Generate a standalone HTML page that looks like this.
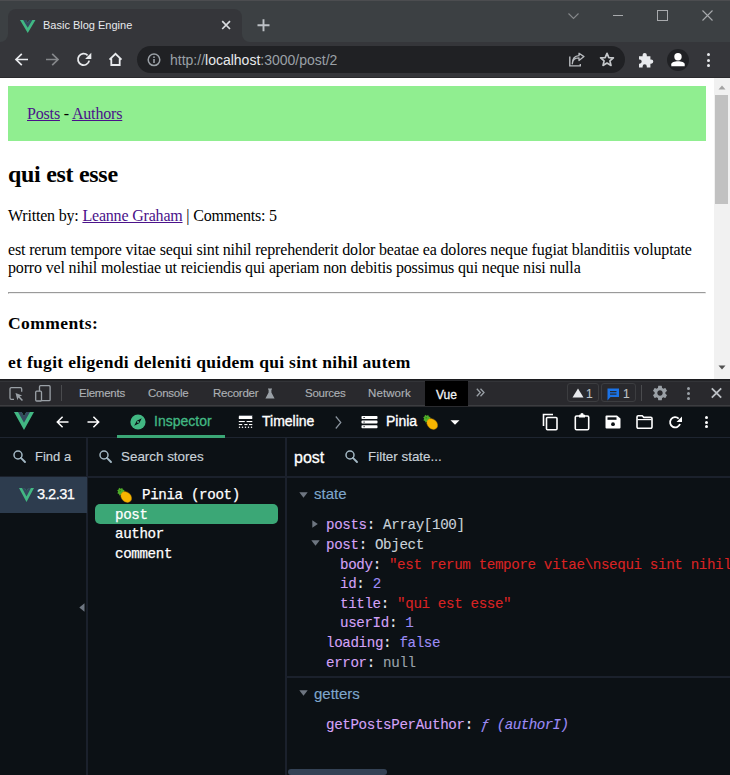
<!DOCTYPE html>
<html><head><meta charset="utf-8">
<style>
*{box-sizing:border-box}
html,body{margin:0;padding:0;width:730px;height:775px;overflow:hidden;background:#0c1115;position:relative}
.a{position:absolute}
.t{position:absolute;white-space:pre;line-height:1;font-family:"Liberation Sans",sans-serif}
.m{position:absolute;white-space:pre;line-height:1;font-family:"Liberation Mono",monospace}
svg{position:absolute;overflow:visible}
/* chrome */
#chrome{position:absolute;left:0;top:0;width:730px;height:78px;background:#35363a}
.fr{position:absolute;background:#3c4043}
/* page */
#page{position:absolute;left:0;top:78px;width:714px;height:301px;background:#fff;overflow:hidden;font-family:"Liberation Serif",serif;color:#000}
#page a{color:#4a128a}
#pagein{margin:8px;position:relative}
#sb{position:absolute;left:714px;top:78px;width:16px;height:301px;background:#f1f1f1}
/* devtools */
#dt .t{-webkit-text-stroke:0.15px currentColor}#dt .m{-webkit-text-stroke:0.12px currentColor}
#dt{position:absolute;left:0;top:379px;width:730px;height:396px;background:#0c1115}
.k{color:#d4a2f7}.c{color:#e6edf3}.o{color:#c9d1d9}.s{color:#d92323}.n{color:#9d8cf6}.g{color:#9ba3ab}
</style></head><body>
<div id="chrome">
  <div class="fr" style="left:0;top:0;width:730px;height:17px"></div>
  <div class="fr" style="left:0;top:0;width:8px;height:42px;border-bottom-right-radius:8px"></div>
  <div class="fr" style="left:242px;top:0;width:488px;height:42px;border-bottom-left-radius:8px"></div>
  <div class="a" style="left:0;top:0;width:730px;height:1px;background:#4c4d50"></div>
  <div class="a" style="left:8px;top:9px;width:234px;height:33px;background:#35363a;border-radius:8px 8px 0 0"></div>
  <!-- tab vue logo -->
  <svg style="left:19.5px;top:19.5px" width="15.5" height="13" viewBox="0 0 261.76 226.69" preserveAspectRatio="none"><path fill="#41b883" d="M161.096.001l-30.225 52.351L100.647.001H-.005l130.877 226.688L261.749.001z"/><path fill="#34495e" d="M161.096.001l-30.225 52.351L100.647.001H52.346l78.526 136.01L209.398.001z"/></svg>
  <div class="t" style="left:43px;top:20px;font-size:11px;color:#e8eaed">Basic Blog Engine</div>
  <!-- tab close -->
  <svg style="left:221px;top:20px" width="10" height="10" viewBox="0 0 10 10"><path d="M1.2 1.2L9 9M9 1.2L1.2 9" stroke="#dadce0" stroke-width="1.7"/></svg>
  <!-- new tab -->
  <svg style="left:257px;top:19px" width="13" height="13" viewBox="0 0 13 13"><path d="M6.5 0.3V12.3M0.5 6.3H12.5" stroke="#bdc1c6" stroke-width="1.9"/></svg>
  <!-- window controls -->
  <svg style="left:568px;top:13px" width="11" height="6" viewBox="0 0 11 6"><path d="M0.5 0.5L5.5 5.5L10.5 0.5" stroke="#86888b" stroke-width="1.1" fill="none"/></svg>
  <div class="a" style="left:613px;top:15px;width:10px;height:1px;background:#a8aaad"></div>
  <div class="a" style="left:657px;top:10px;width:11px;height:11px;border:1px solid #a8aaad"></div>
  <svg style="left:702px;top:10px" width="11" height="11" viewBox="0 0 11 11"><path d="M0.5 0.5L10.5 10.5M10.5 0.5L0.5 10.5" stroke="#a8aaad" stroke-width="1.1"/></svg>
  <!-- toolbar -->
  <div class="a" style="left:0;top:77px;width:730px;height:1px;background:#2a2a2d"></div>
  <svg style="left:14px;top:52px" width="15" height="15" viewBox="0 0 15 15"><path d="M14 7.5H2.2M7.8 1.8L2 7.5L7.8 13.2" stroke="#e8eaed" stroke-width="1.7" fill="none"/></svg>
  <svg style="left:45px;top:52px" width="15" height="15" viewBox="0 0 15 15"><path d="M1 7.5H12.8M7.2 1.8L13 7.5L7.2 13.2" stroke="#85878a" stroke-width="1.7" fill="none"/></svg>
  <svg style="left:76px;top:52px" width="16" height="15" viewBox="0 0 16 15"><path d="M13.2 8.6A5.7 5.7 0 1 1 11.6 3.3" stroke="#e8eaed" stroke-width="1.8" fill="none"/><path d="M15.3 0.8V7H9.1Z" fill="#e8eaed"/></svg>
  <svg style="left:108px;top:52px" width="15" height="15" viewBox="0 0 15 15"><path d="M1.5 7.6L7.5 1.8L13.5 7.6M3.3 6.3V13H11.7V6.3" stroke="#e8eaed" stroke-width="1.8" fill="none" stroke-linejoin="miter"/></svg>
  <div class="a" style="left:137px;top:46px;width:488px;height:27px;background:#202124;border-radius:14px"></div>
  <svg style="left:147px;top:53px" width="14" height="14" viewBox="0 0 14 14"><circle cx="7" cy="6.8" r="5.8" stroke="#9aa0a6" stroke-width="1.5" fill="none"/><rect x="6.2" y="6" width="1.6" height="4" fill="#9aa0a6"/><rect x="6.2" y="3.4" width="1.6" height="1.6" fill="#9aa0a6"/></svg>
  <div class="t" style="left:170px;top:53px;font-size:14px;color:#9aa0a6">http://<span style="color:#e8eaed">localhost</span>:3000/post/2</div>
  <!-- share -->
  <svg style="left:569px;top:53px" width="16" height="14" viewBox="0 0 16 14"><path d="M0.8 3.5V12.9H11.3V11" stroke="#b8bbbf" stroke-width="1.4" fill="none"/><path d="M3.3 10.8C3.6 7 6.3 4.9 10 4.9V7.6L15 3.6L10 0.3V2.7C5.8 2.9 3.4 6.3 3.3 10.8Z" stroke="#b8bbbf" stroke-width="1.3" fill="none" stroke-linejoin="round"/></svg>
  <!-- star -->
  <svg style="left:599px;top:52px" width="16" height="15" viewBox="0 0 16 15"><path d="M8 1.3L9.8 5.6L14.4 5.9L10.9 8.9L12 13.4L8 11L4 13.4L5.1 8.9L1.6 5.9L6.2 5.6Z" stroke="#c4c7ca" stroke-width="1.7" fill="none" stroke-linejoin="round"/></svg>
  <!-- puzzle -->
  <svg style="left:638px;top:52px" width="16" height="16" viewBox="0 0 16 16"><path d="M1 4.2H4.6V3A2.1 2.1 0 0 1 8.8 3V4.2H12.4V7.5H13.2A2.1 2.1 0 0 1 13.2 11.7H12.4V15.4H8.8V14.4A2.1 2.1 0 0 0 4.6 14.4V15.4H1V11.7H1.6A2.1 2.1 0 0 0 1.6 7.5H1Z" fill="#e8eaed"/></svg>
  <!-- profile -->
  <div class="a" style="left:667px;top:49px;width:22px;height:22px;border-radius:50%;background:#202124"></div>
  <svg style="left:668px;top:50px" width="20" height="20" viewBox="0 0 20 20"><circle cx="10" cy="6.8" r="3.7" fill="#fff"/><path d="M3.3 16.2V14.3C3.3 12.2 6.6 11.3 10 11.3C13.4 11.3 16.7 12.2 16.7 14.3V16.2Z" fill="#fff"/></svg>
  <!-- menu -->
  <div class="a" style="left:707px;top:53px;width:3px;height:3px;background:#e8eaed;border-radius:50%"></div>
  <div class="a" style="left:707px;top:58.5px;width:3px;height:3px;background:#e8eaed;border-radius:50%"></div>
  <div class="a" style="left:707px;top:64px;width:3px;height:3px;background:#e8eaed;border-radius:50%"></div>
</div>

<div id="page"><div id="pagein">
<div style="background:#90ee90;padding:19px;font-size:16px;line-height:17px;height:55px;letter-spacing:-0.17px"><a href="#">Posts</a> - <a href="#">Authors</a></div>
<h2 style="font-size:24px;margin:19.92px 0;line-height:26px;letter-spacing:-0.3px">qui est esse</h2>
<p style="font-size:16px;line-height:18px;letter-spacing:-0.19px;margin:16px 0">Written by: <a href="#">Leanne Graham</a> | Comments: 5</p>
<p style="font-size:16px;line-height:18px;letter-spacing:-0.16px;margin:16px 0 15px">est rerum tempore vitae sequi sint nihil reprehenderit dolor beatae ea dolores neque fugiat blanditiis voluptate porro vel nihil molestiae ut reiciendis qui aperiam non debitis possimus qui neque nisi nulla</p>
<hr style="margin:0">
<h3 style="font-size:17.5px;line-height:21px;margin:18.72px 0;letter-spacing:0.42px">Comments:</h3>
<h3 style="font-size:17.5px;line-height:21px;margin:18.72px 0;letter-spacing:0.31px">et fugit eligendi deleniti quidem qui sint nihil autem</h3>
</div></div>
<div id="sb">
  <svg style="left:3px;top:6px" width="10" height="6" viewBox="0 0 10 6"><path d="M1.5 5.5L5 1.5L8.5 5.5Z" fill="#a3a3a3"/></svg>
  <div class="a" style="left:1px;top:17px;width:13px;height:109px;background:#c1c1c1"></div>
  <svg style="left:3px;top:287px" width="10" height="6" viewBox="0 0 10 6"><path d="M1.5 0.5L5 4.5L8.5 0.5Z" fill="#505050"/></svg>
</div>
<div id="dt">
  <!-- chrome devtools toolbar -->
  <div class="a" style="left:0;top:0;width:730px;height:1px;background:#1c1c1f"></div>
  <div class="a" style="left:0;top:1px;width:730px;height:1px;background:#232427"></div>
  <div class="a" style="left:0;top:2px;width:730px;height:1px;background:#333438"></div>
  <div class="a" style="left:0;top:3px;width:730px;height:23px;background:#29292d"></div>
  <div class="a" style="left:0;top:26px;width:730px;height:1px;background:#3c3d40"></div>
  <div class="a" style="left:0;top:27px;width:730px;height:1px;background:#2a2b2f"></div>
  <!-- inspect icon -->
  <svg style="left:9px;top:8px" width="15" height="15" viewBox="0 0 15 15"><path d="M5 12.3H2.3A1.3 1.3 0 0 1 1 11V1.9A1.3 1.3 0 0 1 2.3 0.6H11.4A1.3 1.3 0 0 1 12.7 1.9V4.8" stroke="#9aa0a6" stroke-width="1.3" fill="none"/><path d="M6.5 6L13.2 8.4L10.6 9.5L14 12.9L12.9 14L9.5 10.6L8.4 13.2Z" fill="#9aa0a6"/></svg>
  <!-- device icon -->
  <svg style="left:35px;top:6px" width="16" height="17" viewBox="0 0 16 17"><rect x="4.5" y="0.7" width="10.6" height="15" rx="1" stroke="#9aa0a6" stroke-width="1.3" fill="none"/><rect x="0.7" y="6.2" width="5.8" height="9.8" rx="1" stroke="#9aa0a6" stroke-width="1.3" fill="#29292c"/></svg>
  <div class="a" style="left:61px;top:6px;width:1px;height:16px;background:#4a4b4e"></div>
  <div class="t" style="left:79px;top:9px;font-size:11.5px;letter-spacing:-0.25px;color:#acb0b4">Elements</div>
  <div class="t" style="left:148px;top:9px;font-size:11.5px;letter-spacing:-0.25px;color:#acb0b4">Console</div>
  <div class="t" style="left:213px;top:9px;font-size:11.5px;letter-spacing:-0.25px;color:#acb0b4">Recorder</div>
  <svg style="left:265px;top:9px" width="10" height="11" viewBox="0 0 10 11"><path d="M3 0.5H7V1.5H6.4V4.5L9.6 10.5H0.4L3.6 4.5V1.5H3Z" fill="#9aa0a6"/></svg>
  <div class="t" style="left:305px;top:9px;font-size:11.5px;letter-spacing:-0.25px;color:#acb0b4">Sources</div>
  <div class="t" style="left:368px;top:9px;font-size:11.5px;letter-spacing:0.1px;color:#acb0b4">Network</div>
  <div class="a" style="left:425px;top:2px;width:43px;height:25px;background:#000"></div>
  <div class="t" style="left:436px;top:10px;font-size:12px;color:#f1f3f4;-webkit-text-stroke:0.3px #f1f3f4">Vue</div>
  <svg style="left:476px;top:9px" width="9" height="9" viewBox="0 0 9 9"><path d="M0.8 0.8L4.3 4.5L0.8 8.2M4.5 0.8L8 4.5L4.5 8.2" stroke="#9aa0a6" stroke-width="1.3" fill="none"/></svg>
  <div class="a" style="left:567px;top:4px;width:32px;height:19px;border:1px solid #3c3d40;border-radius:3px"></div>
  <svg style="left:572px;top:9px" width="12" height="10" viewBox="0 0 12 10"><path d="M6 0.5L11.5 9.5H0.5Z" fill="#e8eaed"/></svg>
  <div class="t" style="left:586px;top:9px;font-size:12px;color:#bdc1c6">1</div>
  <div class="a" style="left:601px;top:4px;width:35px;height:19px;border:1px solid #3c3d40;border-radius:3px"></div>
  <svg style="left:607px;top:9px" width="13" height="13" viewBox="0 0 13 13"><path d="M0.5 0.5H12V9H3.5L0.5 12.5Z" fill="#1a73e8"/><rect x="3" y="3" width="6.5" height="1.2" fill="#29292c"/><rect x="3" y="5.5" width="6.5" height="1.2" fill="#29292c"/></svg>
  <div class="t" style="left:623px;top:9px;font-size:12px;color:#bdc1c6">1</div>
  <div class="a" style="left:641px;top:6px;width:1px;height:16px;background:#4a4b4e"></div>
  <!-- gear -->
  <svg style="left:651px;top:5px" width="18" height="18" viewBox="0 0 24 24"><path fill="#9aa0a6" d="M19.14 12.94c.04-.3.06-.61.06-.94 0-.32-.02-.64-.07-.94l2.03-1.58a.49.49 0 0 0 .12-.61l-1.92-3.32a.488.488 0 0 0-.59-.22l-2.39.96c-.5-.38-1.03-.7-1.62-.94l-.36-2.54a.484.484 0 0 0-.48-.41h-3.84c-.24 0-.43.17-.47.41l-.36 2.54c-.59.24-1.13.57-1.62.94l-2.39-.96c-.22-.08-.47 0-.59.22L2.74 8.87c-.12.21-.08.47.12.61l2.03 1.58c-.05.3-.09.63-.09.94s.02.64.07.94l-2.03 1.58a.49.49 0 0 0-.12.61l1.92 3.32c.12.22.37.29.59.22l2.39-.96c.5.38 1.03.7 1.62.94l.36 2.54c.05.24.24.41.48.41h3.84c.24 0 .44-.17.47-.41l.36-2.54c.59-.24 1.13-.56 1.62-.94l2.39.96c.22.08.47 0 .59-.22l1.92-3.32c.12-.22.07-.47-.12-.61l-2.01-1.58zM12 15.6c-1.98 0-3.6-1.62-3.6-3.6s1.62-3.6 3.6-3.6 3.6 1.62 3.6 3.6-1.62 3.6-3.6 3.6z"/></svg>
  <div class="a" style="left:686.5px;top:7.5px;width:3px;height:3px;border-radius:50%;background:#9aa0a6"></div>
  <div class="a" style="left:686.5px;top:12.5px;width:3px;height:3px;border-radius:50%;background:#9aa0a6"></div>
  <div class="a" style="left:686.5px;top:17.5px;width:3px;height:3px;border-radius:50%;background:#9aa0a6"></div>
  <svg style="left:711px;top:9px" width="11" height="10" viewBox="0 0 11 10"><path d="M0.8 0.3L10.2 9.7M10.2 0.3L0.8 9.7" stroke="#bdc1c6" stroke-width="1.8"/></svg>

  <!-- vue devtools header: y 28..58 -->
  <svg style="left:14px;top:33px" width="20" height="18" viewBox="0 0 261.76 226.69" preserveAspectRatio="none"><path fill="#42b883" d="M161.096.001l-30.225 52.351L100.647.001H-.005l130.877 226.688L261.749.001z"/><path fill="#35495e" d="M161.096.001l-30.225 52.351L100.647.001H52.346l78.526 136.01L209.398.001z"/></svg>
  <svg style="left:56px;top:37px" width="13" height="12" viewBox="0 0 13 12"><path d="M12.5 6H1.6M6.6 0.7L1.3 6L6.6 11.3" stroke="#fff" stroke-width="1.5" fill="none"/></svg>
  <svg style="left:87px;top:37px" width="13" height="12" viewBox="0 0 13 12"><path d="M0.5 6H11.4M6.4 0.7L11.7 6L6.4 11.3" stroke="#fff" stroke-width="1.5" fill="none"/></svg>
  <svg style="left:130px;top:35px" width="16" height="16" viewBox="0 0 16 16"><circle cx="8" cy="8" r="7.6" fill="#42b883"/><path d="M11.8 4.2L9.2 9.2L4.2 11.8L6.8 6.8Z" fill="#0c1115"/><circle cx="8" cy="8" r="1" fill="#42b883"/></svg>
  <div class="t" style="left:154px;top:35px;font-size:14px;color:#42b883;-webkit-text-stroke:0.3px #42b883">Inspector</div>
  <div class="a" style="left:117px;top:56px;width:108px;height:3px;background:#3ba776"></div>
  <svg style="left:238px;top:36px" width="16" height="15" viewBox="0 0 16 15"><rect x="1" y="0" width="13.5" height="0.8" fill="#6b7079"/><rect x="0.8" y="1.1" width="13.5" height="3" rx="0.6" fill="#fff"/><rect x="0.8" y="6" width="6" height="1.1" fill="#fff"/><rect x="8.6" y="6" width="5.7" height="1.1" fill="#fff"/><rect x="0.8" y="9" width="3.4" height="1.1" fill="#fff"/><rect x="6.3" y="9" width="3.2" height="1.1" fill="#fff"/><rect x="11" y="9" width="3.3" height="1.1" fill="#fff"/><circle cx="1.5" cy="12.2" r="0.75" fill="#fff"/><circle cx="4.5" cy="12.2" r="0.75" fill="#fff"/><circle cx="7.5" cy="12.2" r="0.75" fill="#fff"/><circle cx="10.5" cy="12.2" r="0.75" fill="#fff"/><circle cx="13.5" cy="12.2" r="0.75" fill="#fff"/></svg>
  <div class="t" style="left:262px;top:35px;font-size:14px;color:#fff;-webkit-text-stroke:0.35px #fff">Timeline</div>
  <svg style="left:335px;top:37px" width="7" height="13" viewBox="0 0 7 13"><path d="M0.8 0.5L5.8 6.5L0.8 12.5" stroke="#8b949e" stroke-width="1.2" fill="none"/></svg>
  <svg style="left:361px;top:37px" width="17" height="13" viewBox="0 0 17 13"><rect x="0.5" y="0" width="16" height="3" rx="0.8" fill="#fff"/><rect x="0.5" y="4.6" width="16" height="3" rx="0.8" fill="#fff"/><rect x="0.5" y="9.2" width="16" height="3" rx="0.8" fill="#fff"/><rect x="2.5" y="1" width="1.2" height="1" fill="#0c1115"/><rect x="2.5" y="5.6" width="1.2" height="1" fill="#0c1115"/><rect x="2.5" y="10.2" width="1.2" height="1" fill="#0c1115"/></svg>
  <div class="t" style="left:386px;top:35px;font-size:14px;color:#fff;-webkit-text-stroke:0.35px #fff">Pinia</div>
  <svg style="left:422px;top:35px" width="16" height="16" viewBox="0 0 16 16"><path d="M1.2 3.2L2.6 2.6L3 0.8L4.6 1.8L6.2 0.9L6.8 2.6L8.6 3.2L7.8 4.8L9 6.4L7.4 7L6.6 8.8L5 7.9L3.4 8.6L3 7L1.3 6.3L2.2 4.8Z" fill="#4fae2a"/><circle cx="4.2" cy="3.8" r="0.7" fill="#2d7a16"/><ellipse cx="10.2" cy="10" rx="6" ry="4.7" fill="#f8b500" transform="rotate(45 10.2 10)"/><ellipse cx="10.2" cy="10" rx="6" ry="4.7" fill="none" stroke="#c98a00" stroke-width="0.4" transform="rotate(45 10.2 10)"/></svg>
  <svg style="left:450px;top:420px;top:41px" width="10" height="5" viewBox="0 0 10 5"><path d="M0.5 0.3H9.5L5 4.8Z" fill="#fff"/></svg>
  <!-- right icons -->
  <svg style="left:542px;top:34px" width="17" height="18" viewBox="0 0 17 18"><path d="M1.5 13V1.5H11" stroke="#fff" stroke-width="1.6" fill="none"/><rect x="4.5" y="4.5" width="10.5" height="12.3" rx="1" stroke="#fff" stroke-width="1.6" fill="none"/></svg>
  <svg style="left:574px;top:34px" width="16" height="18" viewBox="0 0 16 18"><rect x="1.3" y="3" width="13.4" height="13.7" rx="1.3" stroke="#fff" stroke-width="1.6" fill="none"/><path d="M5 1.8H6.3A1.7 1.7 0 0 1 9.7 1.8H11V4.6H5Z" fill="#fff"/></svg>
  <svg style="left:605px;top:36px" width="16" height="14" viewBox="0 0 16 14"><path d="M0.5 1.5A1 1 0 0 1 1.5 0.5H12L15.5 3.5V12.5A1 1 0 0 1 14.5 13.5H1.5A1 1 0 0 1 0.5 12.5Z" fill="#fff"/><rect x="2.5" y="2.3" width="9" height="2.5" fill="#0c1115"/><circle cx="8" cy="9.2" r="1.9" fill="#0c1115"/></svg>
  <svg style="left:636px;top:36px" width="17" height="14" viewBox="0 0 17 14"><path d="M1 2A1.2 1.2 0 0 1 2.2 0.8H6.2L7.8 2.4H14.8A1.2 1.2 0 0 1 16 3.6V12A1.2 1.2 0 0 1 14.8 13.2H2.2A1.2 1.2 0 0 1 1 12Z" stroke="#fff" stroke-width="1.6" fill="none"/><path d="M1.5 4.6H15.5" stroke="#fff" stroke-width="1.2"/></svg>
  <svg style="left:668px;top:36px" width="15" height="15" viewBox="0 0 15 15"><path d="M12 9A5.1 5.1 0 1 1 10.7 3.6" stroke="#fff" stroke-width="1.8" fill="none"/><path d="M14 1.5V7H8.5Z" fill="#fff"/></svg>
  <div class="a" style="left:705px;top:37px;width:3px;height:3px;border-radius:50%;background:#fff"></div>
  <div class="a" style="left:705px;top:41.5px;width:3px;height:3px;border-radius:50%;background:#fff"></div>
  <div class="a" style="left:705px;top:46px;width:3px;height:3px;border-radius:50%;background:#fff"></div>
  <div class="a" style="left:0;top:58px;width:730px;height:1px;background:#1e2530"></div>
  <div class="a" style="left:117px;top:56px;width:108px;height:3px;background:#3ba776"></div>

  <!-- columns -->
  <div class="a" style="left:86px;top:59px;width:2px;height:337px;background:#1b212c"></div>
  <div class="a" style="left:285px;top:59px;width:2px;height:337px;background:#1b212c"></div>
  <div class="a" style="left:88px;top:97px;width:642px;height:2px;background:#1b212c"></div>
  <div class="a" style="left:0;top:97px;width:86px;height:1px;background:#1b212c"></div>
  <!-- left col -->
  <svg style="left:13px;top:71px" width="13" height="13" viewBox="0 0 13 13"><circle cx="5" cy="5" r="4" stroke="#a3b8c4" stroke-width="1.5" fill="none"/><path d="M7.9 7.9L12 12" stroke="#a3b8c4" stroke-width="1.9" stroke-linecap="round"/></svg>
  <div class="t" style="left:35px;top:71px;font-size:13px;color:#c9d1d9">Find a</div>
  <div class="a" style="left:0;top:98px;width:87px;height:36px;background:#2d3c4e"></div>
  <svg style="left:19px;top:109px" width="15" height="14" viewBox="0 0 261.76 226.69" preserveAspectRatio="none"><path fill="#42b883" d="M161.096.001l-30.225 52.351L100.647.001H-.005l130.877 226.688L261.749.001z"/><path fill="#35495e" d="M161.096.001l-30.225 52.351L100.647.001H52.346l78.526 136.01L209.398.001z"/></svg>
  <div class="t" style="left:37px;top:108px;font-size:14.6px;letter-spacing:-0.55px;color:#fff;-webkit-text-stroke:0.25px #fff">3.2.31</div>
  <svg style="left:79px;top:224px" width="6" height="9" viewBox="0 0 6 9"><path d="M5.5 0.3V8.7L0.3 4.5Z" fill="#6e7681"/></svg>
  <!-- middle col -->
  <svg style="left:99px;top:71px" width="13" height="13" viewBox="0 0 13 13"><circle cx="5" cy="5" r="4" stroke="#a3b8c4" stroke-width="1.5" fill="none"/><path d="M7.9 7.9L12 12" stroke="#a3b8c4" stroke-width="1.9" stroke-linecap="round"/></svg>
  <div class="t" style="left:121px;top:71px;font-size:13.4px;color:#c9d1d9">Search stores</div>
  <svg style="left:116px;top:108px" width="16" height="16" viewBox="0 0 16 16"><path d="M1.2 3.2L2.6 2.6L3 0.8L4.6 1.8L6.2 0.9L6.8 2.6L8.6 3.2L7.8 4.8L9 6.4L7.4 7L6.6 8.8L5 7.9L3.4 8.6L3 7L1.3 6.3L2.2 4.8Z" fill="#4fae2a"/><circle cx="4.2" cy="3.8" r="0.7" fill="#2d7a16"/><ellipse cx="10.2" cy="10" rx="6" ry="4.7" fill="#f8b500" transform="rotate(45 10.2 10)"/><ellipse cx="10.2" cy="10" rx="6" ry="4.7" fill="none" stroke="#c98a00" stroke-width="0.4" transform="rotate(45 10.2 10)"/></svg>
  <div class="m" style="left:142px;top:109px;font-size:14.2px;letter-spacing:-0.36px;color:#fff;-webkit-text-stroke:0.25px #fff">Pinia (root)</div>
  <div class="a" style="left:95px;top:125px;width:183px;height:20px;border-radius:5px;background:#3ba776"></div>
  <div class="m" style="left:115px;top:129px;font-size:14.2px;letter-spacing:-0.36px;color:#fff;-webkit-text-stroke:0.25px #fff">post</div>
  <div class="m" style="left:115px;top:148px;font-size:14.2px;letter-spacing:-0.36px;color:#fff;-webkit-text-stroke:0.25px #fff">author</div>
  <div class="m" style="left:115px;top:168px;font-size:14.2px;letter-spacing:-0.36px;color:#fff;-webkit-text-stroke:0.25px #fff">comment</div>
  <!-- right col -->
  <div class="t" style="left:294px;top:71px;font-size:16px;color:#fff;-webkit-text-stroke:0.3px #fff">post</div>
  <svg style="left:345px;top:71px" width="13" height="13" viewBox="0 0 13 13"><circle cx="5" cy="5" r="4" stroke="#a3b8c4" stroke-width="1.5" fill="none"/><path d="M7.9 7.9L12 12" stroke="#a3b8c4" stroke-width="1.9" stroke-linecap="round"/></svg>
  <div class="t" style="left:368px;top:71px;font-size:13.4px;color:#c9d1d9">Filter state...</div>
  <svg style="left:299px;top:113px" width="9" height="6" viewBox="0 0 9 6"><path d="M0.3 0.3H8.7L4.5 5.8Z" fill="#6e7681"/></svg>
  <div class="t" style="left:314px;top:107px;font-size:15px;color:#7ea6cc">state</div>
  <svg style="left:312px;top:141px" width="6" height="8" viewBox="0 0 6 8"><path d="M0.3 0.3V7.7L5.8 4Z" fill="#6e7681"/></svg>
  <div class="m" style="left:326px;top:139px;font-size:14.2px;letter-spacing:-0.36px"><span class="k">posts</span><span class="c">: </span><span class="o">Array[100]</span></div>
  <svg style="left:311px;top:161px" width="9" height="6" viewBox="0 0 9 6"><path d="M0.3 0.3H8.7L4.5 5.8Z" fill="#6e7681"/></svg>
  <div class="m" style="left:326px;top:159px;font-size:14.2px;letter-spacing:-0.36px"><span class="k">post</span><span class="c">: </span><span class="o">Object</span></div>
  <div class="m" style="left:340px;top:179px;font-size:14.2px;letter-spacing:-0.36px"><span class="k">body</span><span class="c">: </span><span class="s">"est rerum tempore vitae\nsequi sint nihil reprehenderit"</span></div>
  <div class="m" style="left:340px;top:198px;font-size:14.2px;letter-spacing:-0.36px"><span class="k">id</span><span class="c">: </span><span class="n">2</span></div>
  <div class="m" style="left:340px;top:218px;font-size:14.2px;letter-spacing:-0.36px"><span class="k">title</span><span class="c">: </span><span class="s">"qui est esse"</span></div>
  <div class="m" style="left:340px;top:237px;font-size:14.2px;letter-spacing:-0.36px"><span class="k">userId</span><span class="c">: </span><span class="n">1</span></div>
  <div class="m" style="left:326px;top:257px;font-size:14.2px;letter-spacing:-0.36px"><span class="k">loading</span><span class="c">: </span><span class="n">false</span></div>
  <div class="m" style="left:326px;top:277px;font-size:14.2px;letter-spacing:-0.36px"><span class="k">error</span><span class="c">: </span><span class="g">null</span></div>
  <div class="a" style="left:287px;top:297px;width:443px;height:2px;background:#1b212c"></div>
  <svg style="left:299px;top:311px" width="9" height="6" viewBox="0 0 9 6"><path d="M0.3 0.3H8.7L4.5 5.8Z" fill="#6e7681"/></svg>
  <div class="t" style="left:314px;top:307px;font-size:15px;color:#7ea6cc">getters</div>
  <div class="m" style="left:326px;top:339px;font-size:14.2px;letter-spacing:-0.36px"><span class="k">getPostsPerAuthor</span><span class="c">: </span><span class="n" style="font-style:italic;letter-spacing:-0.55px">&#402; (authorI)</span></div>
  <div class="a" style="left:288px;top:390px;width:99px;height:6px;border-radius:3px;background:#344255"></div>
</div>
</body></html>
